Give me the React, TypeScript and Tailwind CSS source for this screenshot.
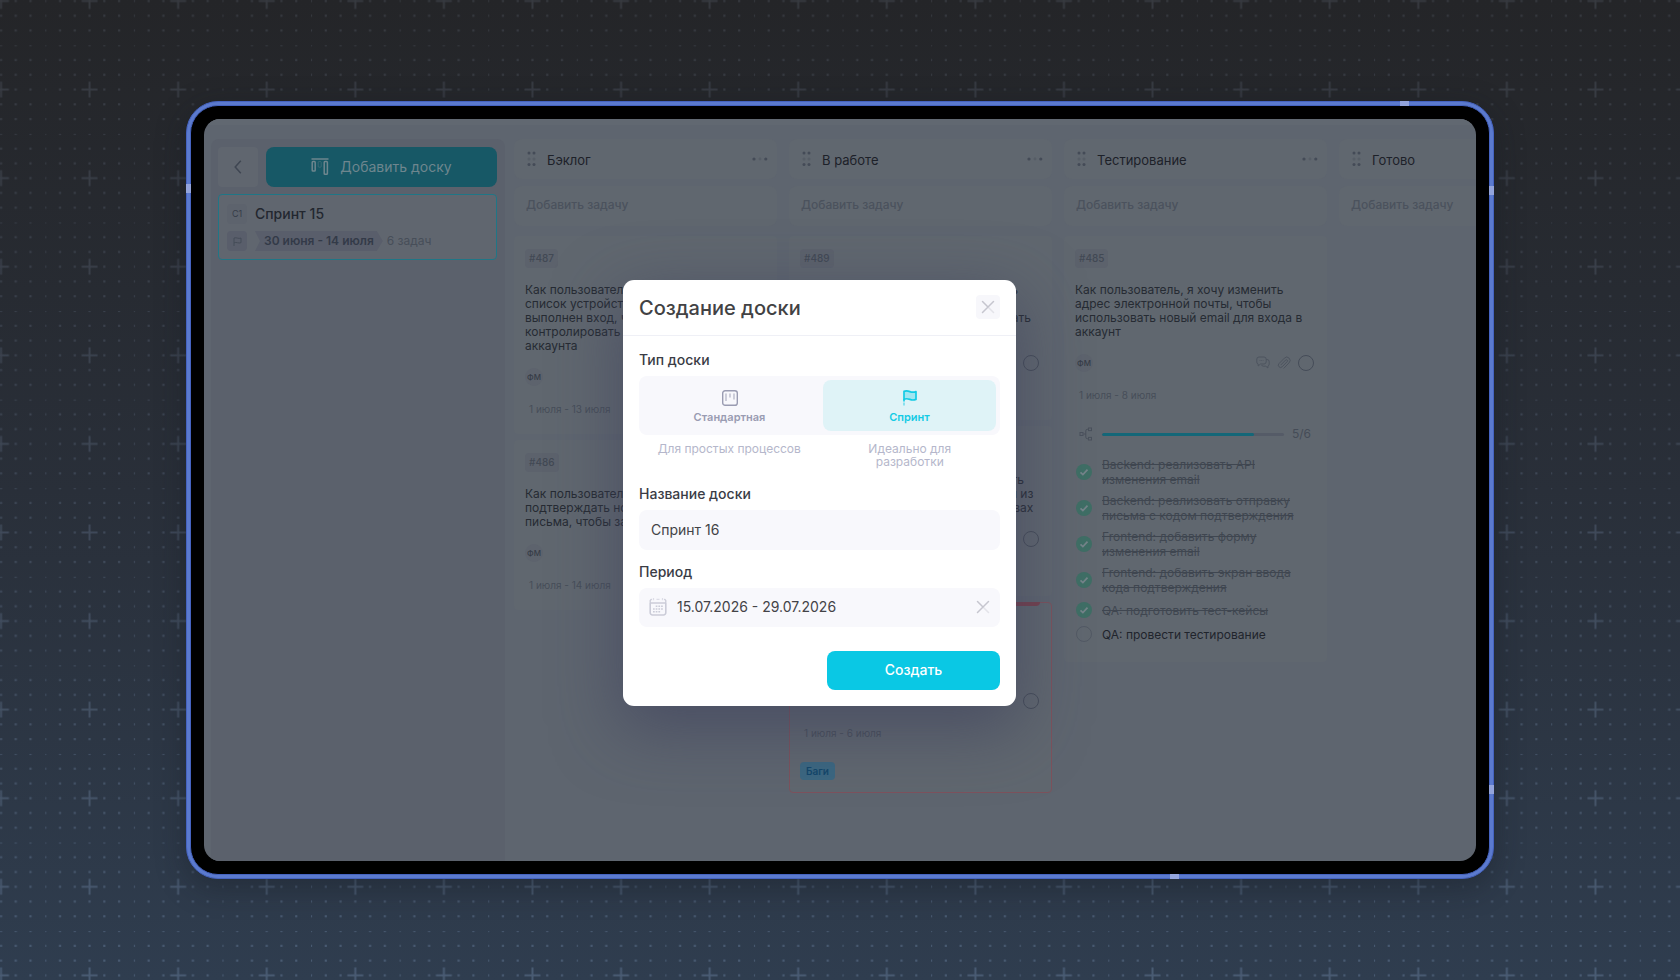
import { useState } from "react";
import clsx from "clsx";

type Task = {
  id: string;
  title: string;
  period: string;
  assignee?: string;
  tag?: string;
  urgent?: boolean;
  full?: boolean;
};

type Column = { name: string; tasks: Task[] };

const columns: Column[] = [
  {
    name: "Бэклог",
    tasks: [
      {
        id: "#487",
        title:
          "Как пользователь, я хочу видеть\nсписок устройств, на которых\nвыполнен вход, чтобы\nконтролировать доступ\nаккаунта",
        period: "1 июля - 13 июля",
        assignee: "ФМ",
      },
      {
        id: "#486",
        title: "Как пользователь, я хочу\nподтверждать новый email из\nписьма, чтобы защитить вход",
        period: "1 июля - 14 июля",
        assignee: "ФМ",
      },
    ],
  },
  {
    name: "В работе",
    tasks: [
      {
        id: "#489",
        title:
          "Как пользователь, я хочу выключать\nпривязанный телефон,\nчтобы при потере доступа подключать\nновый",
        period: "1 июля - 9 июля",
      },
      {
        id: "#488",
        title: "Как пользователь, я хочу подключать\nвходы по коду из письма на почте, и из\nсообщений об их устройствах и правах",
        period: "1 июля - 10 июля",
      },
      {
        id: "#490",
        title: "Не приходит письмо\nс подтверждением",
        period: "1 июля - 6 июля",
        tag: "Баги",
        urgent: true,
      },
    ],
  },
  {
    name: "Тестирование",
    tasks: [
      {
        id: "#485",
        title:
          "Как пользователь, я хочу изменить\nадрес электронной почты, чтобы\nиспользовать новый email для входа в\nаккаунт",
        period: "1 июля - 8 июля",
        assignee: "ФМ",
        full: true,
      },
    ],
  },
  { name: "Готово", tasks: [] },
];

const checklist = [
  { text: "Backend: реализовать API\nизменения email", done: true },
  { text: "Backend: реализовать отправку\nписьма с кодом подтверждения", done: true },
  { text: "Frontend: добавить форму\nизменения email", done: true },
  { text: "Frontend: добавить экран ввода\nкода подтверждения", done: true },
  { text: "QA: подготовить тест-кейсы", done: true },
  { text: "QA: провести тестирование", done: false },
];

function Backdrop() {
  return (
    <svg className="absolute inset-0 h-full w-full" aria-hidden="true">
      <defs>
        <linearGradient id="ink" x1="0" y1="0" x2="0" y2="1">
          <stop offset="0" stopColor="#373a40" />
          <stop offset="0.3" stopColor="#3a404b" />
          <stop offset="1" stopColor="#4a5c74" />
        </linearGradient>
        <pattern id="grid" width="88.58" height="88.58" patternUnits="userSpaceOnUse" patternTransform="translate(-43.3 -43.3)">
          {Array.from({ length: 36 }).map((_, i) => {
            const col = i % 6;
            const row = Math.floor(i / 6);
            if (col === 3 && row === 3) return null;
            return <rect key={i} x={col * 14.763 - 1.1} y={row * 14.763 - 1.1} width="2.2" height="2.2" fill="#fff" />;
          })}
          <path d="M44.3 36.3v16M36.3 44.3h16" stroke="#fff" strokeWidth="2" />
        </pattern>
        <mask id="gridMask">
          <rect width="100%" height="100%" fill="url(#grid)" />
        </mask>
      </defs>
      <rect width="100%" height="100%" fill="url(#ink)" mask="url(#gridMask)" />
    </svg>
  );
}

function BoardIcon() {
  return (
    <svg width="18" height="18" viewBox="0 0 18 18" fill="none" stroke="currentColor">
      <path d="M0.5 1h17" strokeWidth="1.6" />
      <rect x="1.2" y="3.6" width="3" height="9.4" rx="0.8" strokeWidth="1.5" />
      <rect x="13.2" y="3.6" width="3.2" height="12.6" rx="0.8" strokeWidth="1.5" />
      <rect x="7.2" y="3.6" width="3" height="5.6" rx="0.8" opacity="0.4" />
    </svg>
  );
}

function StandardIcon() {
  return (
    <svg width="16" height="16" viewBox="0 0 16 16" fill="none" stroke="currentColor">
      <rect x="0.7" y="0.7" width="14.6" height="14.6" rx="2.4" strokeWidth="1.4" />
      <path d="M4 3.5v7.5M8 3.5v4M12 3.5v6" strokeWidth="1.8" opacity="0.5" />
    </svg>
  );
}

function FlagIcon() {
  return (
    <svg width="16" height="16" viewBox="0 0 16 16" fill="none" stroke="currentColor" strokeWidth="1.7">
      <path
        d="M2 1.4c1.9-.8 3.9-.5 5.9.2 2 .8 4 .8 6.1 0v7.8c-2.1.8-4.1.8-6.1 0-2-.7-4-1-5.9-.2z"
        strokeLinejoin="round"
        fill="currentColor"
        fillOpacity="0.3"
      />
      <path d="M2 9v2.5" />
      <path d="M2 12.4v3.2" opacity="0.5" />
    </svg>
  );
}

function SmallFlagIcon() {
  return (
    <svg width="9" height="9" viewBox="0 0 9 9" fill="none" stroke="currentColor">
      <path d="M1 9V1c1.2-.4 2.4-.3 3.5.1s2.3.4 3.5 0v4.6c-1.2.4-2.4.4-3.5 0S2.2 5.4 1 5.8" />
    </svg>
  );
}

function CalendarIcon() {
  return (
    <svg width="18" height="18" viewBox="0 0 18 18" fill="none" stroke="#cbccd8">
      <path d="M1.2 5v9.6A2.3 2.3 0 0 0 3.500 17h11a2.3 2.3 0 0 0 2.3-2.4V5" strokeWidth="1.6" />
      <path d="M1.2 5V2.6L2.6 1M16.8 5V2.6L15.4 1M1 5h16" strokeWidth="1.3" />
      <path d="M4.500 0v2.2M13.500 0v2.2M7.500 1.3h3" strokeWidth="1.2" opacity="0.6" />
      <path d="M6.7 8.3h7.8M4 11h10.500M4 13.7h7.8" strokeWidth="1.6" strokeDasharray="1.7 1" />
    </svg>
  );
}

function CrossIcon() {
  return (
    <svg width="14" height="14" viewBox="0 0 14 14" fill="none" stroke="#c6c6cf" strokeWidth="1.5" strokeLinecap="round">
      <path d="M12.5 1.5l-11 11M1.5 1.5L7 7" />
      <path d="M7 7l5.5 5.5" opacity="0.4" />
    </svg>
  );
}

function GripIcon() {
  return (
    <svg width="10" height="16" viewBox="0 0 10 16" fill="#444b57">
      <circle cx="2" cy="2" r="1.5" />
      <circle cx="7" cy="2" r="1.5" />
      <circle cx="2" cy="8" r="1.5" opacity="0.35" />
      <circle cx="7" cy="8" r="1.5" opacity="0.35" />
      <circle cx="2" cy="13.5" r="1.5" />
      <circle cx="7" cy="13.5" r="1.5" />
    </svg>
  );
}

function DotsIcon() {
  return (
    <svg width="16" height="4" viewBox="0 0 16 4" fill="#444b57">
      <circle cx="2" cy="2" r="1.6" />
      <circle cx="8" cy="2" r="1.4" opacity="0.35" />
      <circle cx="13.8" cy="2" r="1.6" />
    </svg>
  );
}

function ChatIcon() {
  return (
    <svg width="14" height="14" viewBox="0 0 14 14" fill="none" stroke="#4d545f" strokeLinejoin="round">
      <path d="M3 1h5a2.2 2.2 0 0 1 2.2 2.2v2.6A2.2 2.2 0 0 1 8 8H4.5L2.2 10V8A1.8 1.8 0 0 1 .8 6V3.200A2.2 2.2 0 0 1 3 1z" />
      <path d="M10.2 3.5h.8a2.2 2.2 0 0 1 2.2 2.2v2.5c0 1-.6 1.6-1.3 1.8v2l-2.2-1.8H7.5c-1 0-1.7-.5-2-1.2" />
      <path d="M3.5 4.5h4" strokeDasharray="1 0.7" opacity="0.7" />
    </svg>
  );
}

function ClipIcon() {
  return (
    <svg width="14" height="14" viewBox="0 0 14 14" fill="none" stroke="#4d545f" strokeLinecap="round">
      <path d="M4 8.8l4.6-4.7a1.1 1.1 0 0 1 1.6 1.6l-5 5.1a2.2 2.2 0 0 1-3.2-3.2l5.4-5.5a3.3 3.3 0 0 1 4.7 4.7l-5.2 5.4" />
    </svg>
  );
}

function TreeIcon() {
  return (
    <svg width="14" height="14" viewBox="0 0 14 14" fill="none" stroke="#4a515c">
      <rect x="1" y="5.5" width="3" height="3" />
      <rect x="9.5" y="1" width="3" height="2.6" />
      <rect x="9.5" y="10.4" width="3" height="2.6" />
      <path d="M4.5 7h2.3M9 2.3H8.3A1.5 1.5 0 0 0 6.800 3.800v6.400a1.5 1.5 0 0 0 1.5 1.5H9" />
    </svg>
  );
}

function Sidebar() {
  return (
    <aside className="flex w-[294px] shrink-0 flex-col gap-[7px] rounded-t-lg bg-[#5b616c] p-2 pl-[7px]">
      <div className="flex gap-2">
        <button aria-label="Назад" className="flex size-10 items-center justify-center rounded bg-[#60666f] text-[#3f4652]">
          <svg width="8" height="14" viewBox="0 0 8 14" fill="none" stroke="currentColor" strokeWidth="1.5">
            <path d="M6.8 .8L1.2 7l5.6 6.2" />
          </svg>
        </button>
        <button className="flex h-10 flex-1 items-center justify-center gap-[11px] rounded-lg bg-[#175866] text-sm text-[#6e868e]">
          <BoardIcon />
          Добавить доску
        </button>
      </div>
      <a href="#sprint-15" className="flex flex-col gap-[7px] rounded border border-[#207686] bg-[#60666f] p-2 pt-[9px]">
        <span className="flex items-center gap-2">
          <span className="flex size-5 items-center justify-center rounded bg-[#5d636d] text-[9px] text-[#363c48]">С1</span>
          <span className="text-sm font-medium leading-5 text-[#23272f]">Спринт 15</span>
        </span>
        <span className="flex items-center">
          <span className="mr-2 flex size-5 items-center justify-center rounded bg-[#595e6b] text-[#454c58]">
            <SmallFlagIcon />
          </span>
          <span className="mr-1 h-5 bg-[#595e6b] px-[9px] text-xs font-semibold leading-5 text-[#333a48] [clip-path:polygon(0_0,calc(100%-6px)_0,100%_50%,calc(100%-6px)_100%,0_100%,5px_50%)]">
            30 июня - 14 июля
          </span>
          <span className="text-xs text-[#474e59]">6 задач</span>
        </span>
      </a>
    </aside>
  );
}

function Checklist() {
  return (
    <div className="flex flex-col gap-[15px]">
      <div className="flex items-center">
        <span className="flex w-[27px] pl-1">
          <TreeIcon />
        </span>
        <div className="h-[3px] flex-1 overflow-hidden rounded-full bg-[#555b67]">
          <div className="h-full rounded-full bg-[#146778]" style={{ width: `${(5 / 6) * 100}%` }} />
        </div>
        <span className="w-8 pl-2 text-xs leading-4 text-[#454c57]">5/6</span>
      </div>
      <ul className="flex flex-col gap-[6px]">
        {checklist.map((item) => (
          <li key={item.text}>
            <label className="flex min-h-[18px] items-center gap-[10px] pl-px">
              <input type="checkbox" defaultChecked={item.done} className="peer sr-only" />
              {item.done ? (
                <svg width="16" height="16" viewBox="0 0 16 16" className="shrink-0">
                  <circle cx="8" cy="8" r="8" fill="#3f6e65" />
                  <path d="M4.5 8.3l2.4 2.3 4.6-4.9" fill="none" stroke="#75848a" strokeWidth="1.7" />
                </svg>
              ) : (
                <span className="size-4 shrink-0 rounded-full border border-[#525964]" />
              )}
              <span
                className={clsx(
                  "whitespace-pre text-xs leading-[15px]",
                  item.done ? "text-[#3f4650] line-through" : "text-[#20242c]"
                )}
              >
                {item.text}
              </span>
            </label>
          </li>
        ))}
      </ul>
    </div>
  );
}

function TaskCard({ task }: { task: Task }) {
  return (
    <article
      className={clsx(
        "relative rounded bg-[#60676f] px-[11px] pt-[13px] text-[#262b33]",
        task.urgent ? "pb-[13px] outline -outline-offset-1 outline-[#7d525c]" : "pb-4"
      )}
    >
      {task.urgent && <span className="absolute right-3 top-0 h-1 w-10 rounded-b bg-[#76414d]" />}
      <span className="block h-[19px] w-fit rounded bg-[#5c626c] px-1 text-[10px] font-medium leading-[19px] text-[#424954]">
        {task.id}
      </span>
      <h3 className="mt-[15px] whitespace-pre text-xs leading-[14px]">{task.title}</h3>
      <div className="mt-[15px] flex h-[18px] items-center gap-[7px]">
        {task.assignee && (
          <span className="flex size-[18px] items-center justify-center rounded-full bg-[#5d636d] text-[8px] font-medium text-[#363c47]">
            {task.assignee}
          </span>
        )}
        <span className="flex-1" />
        {task.full && (
          <>
            <ChatIcon />
            <ClipIcon />
          </>
        )}
        <button aria-label="Завершить задачу" className="mr-0.5 size-4 rounded-full border border-[#454c58]" />
      </div>
      <div className="mt-[14px] pl-1 text-[10px] leading-[18px] text-[#474e59]">{task.period}</div>
      {task.tag && (
        <span className="mt-5 block h-[18px] w-fit rounded bg-[#3b6781] px-[6px] text-[10px] font-semibold leading-[18px] text-[#12466a]">
          {task.tag}
        </span>
      )}
      {task.full && (
        <div className="mb-[3px] mt-[22px]">
          <Checklist />
        </div>
      )}
    </article>
  );
}

function BoardColumn({ column }: { column: Column }) {
  return (
    <section className="w-[263px] shrink-0">
      <header className="flex h-10 items-center rounded-lg bg-[#60676f] pl-[13px] pr-[9px]">
        <GripIcon />
        <h2 className="ml-[10px] flex-1 pt-1 text-[13px] text-[#1d2129]">{column.name}</h2>
        <button aria-label="Меню колонки">
          <DotsIcon />
        </button>
      </header>
      <input
        aria-label="Добавить задачу"
        placeholder="Добавить задачу"
        className="mt-[7px] block h-10 w-full rounded-lg bg-[#60676f] px-3 pb-1 text-xs font-medium placeholder:text-[#4b525d]"
      />
      <div className="mt-[10px] flex flex-col gap-[6px]">
        {column.tasks.map((task) => (
          <TaskCard key={task.id} task={task} />
        ))}
      </div>
    </section>
  );
}

const boardTypes = [
  { id: "standard", label: "Стандартная", hint: "Для простых процессов" },
  { id: "sprint", label: "Спринт", hint: "Идеально для разработки" },
];

function CreateBoardDialog() {
  const [type, setType] = useState("sprint");

  return (
    <form
      role="dialog"
      aria-labelledby="dialog-title"
      onSubmit={(e) => e.preventDefault()}
      className="w-[393px] rounded-[11px] bg-white text-sm text-[#3a3c45] shadow-[0_20px_64px_4px_rgba(60,64,92,0.6)]"
    >
      <div className="flex h-14 items-center justify-between border-b border-[#eff0f6] px-4">
        <h1 id="dialog-title" className="pt-0.5 text-xl font-medium text-[#424244]">
          Создание доски
        </h1>
        <button type="button" aria-label="Закрыть" className="flex size-6 items-center justify-center rounded bg-[#f7f7fb]">
          <CrossIcon />
        </button>
      </div>

      <div className="px-4 pb-4 pt-[14px]">
        <fieldset>
          <legend className="font-medium leading-5">Тип доски</legend>
          <div className="mt-[6px] grid grid-cols-2 gap-[7px] rounded-lg bg-[#f8f8fc] p-1">
            {boardTypes.map((item) => (
              <label
                key={item.id}
                className={clsx(
                  "flex h-[51px] flex-col items-center justify-center gap-1 rounded-lg pt-1 text-[11px] font-semibold leading-[14px]",
                  type === item.id ? "bg-[#dff3f7] text-[#14cbe5]" : "text-[#9a9cb2]"
                )}
              >
                <input
                  type="radio"
                  name="board-type"
                  value={item.id}
                  checked={type === item.id}
                  onChange={() => setType(item.id)}
                  className="sr-only"
                />
                {item.id === "sprint" ? <FlagIcon /> : <StandardIcon />}
                {item.label}
              </label>
            ))}
          </div>
        </fieldset>
        <div className="mt-[7px] grid grid-cols-2 text-center text-xs leading-[13px] text-[#b5b7cb]">
          {boardTypes.map((item) => (
            <p key={item.id} className={item.id === "sprint" ? "px-10" : ""}>
              {item.hint}
            </p>
          ))}
        </div>

        <label htmlFor="board-name" className="mt-4 block font-medium leading-5">
          Название доски
        </label>
        <input
          id="board-name"
          defaultValue="Спринт 16"
          className="mt-[6px] block h-10 w-full rounded-lg bg-[#f8f8fc] px-3 text-[#434347]"
        />

        <label htmlFor="board-period" className="mt-3 block font-medium leading-5">
          Период
        </label>
        <div className="mt-[6px] flex h-[39px] items-center gap-[10px] rounded-lg bg-[#f8f8fc] px-[10px]">
          <CalendarIcon />
          <input id="board-period" defaultValue="15.07.2026 - 29.07.2026" className="min-w-0 flex-1 text-[#434347]" />
          <button type="button" aria-label="Очистить период">
            <CrossIcon />
          </button>
        </div>

        <div className="mt-6 flex justify-end">
          <button type="submit" className="h-[39px] w-[173px] rounded-lg bg-[#0ac8e4] font-medium text-white">
            Создать
          </button>
        </div>
      </div>
    </form>
  );
}

export default function App() {
  return (
    <main className="relative h-screen overflow-hidden bg-linear-to-b from-[#242528] via-[#292f39] to-[#2f3d4f] px-[186px] py-[101px] font-[Inter,'Noto_Sans',sans-serif]">
      <Backdrop />
      <div className="relative h-full rounded-[32px] border border-[#4563c0] bg-[#5b7ace] p-[3px] shadow-[0_8px_30px_rgba(20,24,32,0.4)]">
        {/* antenna bands */}
        <span className="absolute -left-px top-[82px] h-[9px] w-[5px] bg-[#93a4dc]" />
        <span className="absolute -right-px top-[84px] h-[9px] w-[5px] bg-[#93a4dc]" />
        <span className="absolute -right-px bottom-[84px] h-[9px] w-[5px] bg-[#93a4dc]" />
        <span className="absolute -top-px right-[84px] h-[5px] w-[9px] bg-[#93a4dc]" />
        <span className="absolute -bottom-px right-[314px] h-[5px] w-[9px] bg-[#93a4dc]" />
        <div className="h-full rounded-[28px] border border-[#4563c0] bg-black p-[13px]">
          <div className="relative h-full overflow-hidden rounded-2xl bg-[#5e656f]">
            <div className="h-[6px] bg-[#616871]" />
            <div className="flex h-full gap-[9px] pl-[7px] pt-[14px]">
              <Sidebar />
              <div className="flex min-w-0 flex-1 gap-3 overflow-hidden">
                {columns.map((column) => (
                  <BoardColumn key={column.name} column={column} />
                ))}
              </div>
            </div>
            <div className="absolute inset-0 flex items-center justify-center pr-[41px] pt-[5px]">
              <CreateBoardDialog />
            </div>
          </div>
        </div>
      </div>
    </main>
  );
}
